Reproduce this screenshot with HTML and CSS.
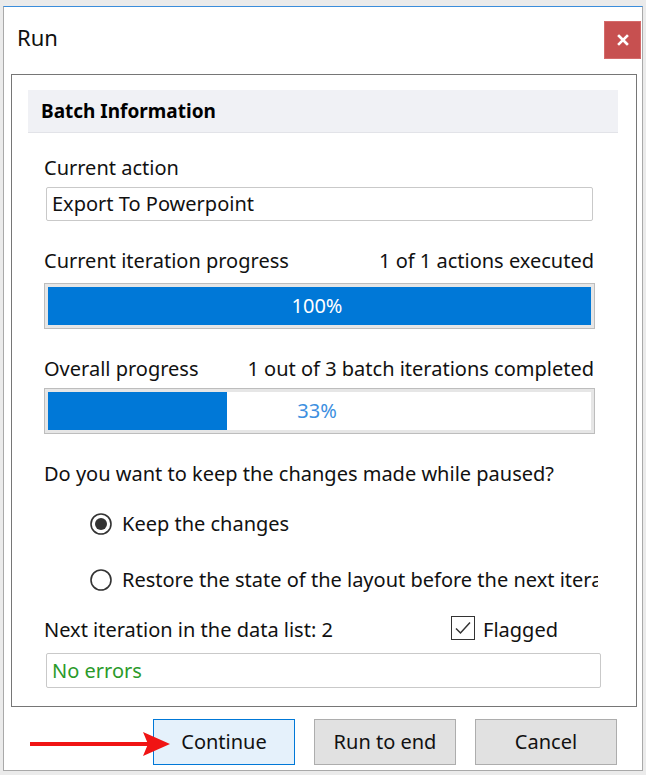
FILE: index.html
```html
<!DOCTYPE html>
<html>
<head>
<meta charset="utf-8">
<link rel="stylesheet" href="styles.css">
</head>
<body>
<div class="window">
  <div class="titlebar">
    <span class="title">Run</span>
    <div class="close">
      <svg width="12" height="12" viewBox="0 0 12 12"><path d="M2 2 L10 10 M10 2 L2 10" stroke="#fff" stroke-width="2.6" stroke-linecap="square"/></svg>
    </div>
  </div>
  <div class="group">
    <div class="group-header">Batch Information</div>
    <div class="group-body">
      <div class="label l-action">Current action</div>
      <div class="field">Export To Powerpoint</div>

      <div class="label-row l-iter"><span>Current iteration progress</span><span>1 of 1 actions executed</span></div>
      <div class="bar b-iter">
        <div class="track">
          <div class="fill" style="width:100%"></div>
          <span class="pct pct-on">100%</span>
        </div>
      </div>

      <div class="label-row l-overall"><span>Overall progress</span><span>1 out of 3 batch iterations completed</span></div>
      <div class="bar b-overall">
        <div class="track">
          <div class="fill" style="width:33%"></div>
          <span class="pct pct-off">33%</span>
        </div>
      </div>

      <div class="label question">Do you want to keep the changes made while paused?</div>

      <div class="radio-row r-keep">
        <svg class="radio" width="22" height="22" viewBox="0 0 22 22"><circle cx="11" cy="11" r="10" fill="#fff" stroke="#333" stroke-width="1.6"/><circle cx="11" cy="11" r="6" fill="#333"/></svg>
        <span class="radio-text">Keep the changes</span>
      </div>
      <div class="radio-row r-restore">
        <svg class="radio" width="22" height="22" viewBox="0 0 22 22"><circle cx="11" cy="11" r="10" fill="#fff" stroke="#333" stroke-width="1.6"/></svg>
        <span class="radio-text">Restore the state of the layout before the next iteration</span>
      </div>

      <div class="next-row">
        <span>Next iteration in the data list: 2</span>
        <div class="flag">
          <svg class="check" width="24" height="24" viewBox="0 0 24 24"><rect x="0.5" y="0.5" width="23" height="23" fill="#fff" stroke="#333" stroke-width="1"/><polyline points="5,12.5 9.5,17 19,6.5" fill="none" stroke="#333" stroke-width="1.5"/></svg>
          <span>Flagged</span>
        </div>
      </div>
      <div class="field status">No errors</div>
    </div>
  </div>
  <div class="actions">
    <svg class="arrow" width="142" height="26" viewBox="0 0 142 26"><rect x="0" y="11" width="118" height="4" fill="#f01414"/><polygon points="113,1 140,13 113,25 118,13" fill="#f01414"/></svg>
    <div class="btn btn-primary">Continue</div>
    <div class="btn">Run to end</div>
    <div class="btn">Cancel</div>
  </div>
</div>
</body>
</html>
```
FILE: styles.css
```css
html, body {
  margin: 0;
  padding: 0;
}
body {
  background: #ebebeb;
  font-family: "Noto Sans", "Open Sans", sans-serif;
  font-size: 20px;
  color: #111;
  width: 646px;
  height: 775px;
  overflow: hidden;
}
.window {
  box-sizing: border-box;
  margin: 6px 0 0 3px;
  width: 640px;
  height: 765px;
  background: #fff;
  border: 1px solid #a9a9a9;
  border-top: 1px solid #3b8ddb;
  display: flex;
  flex-direction: column;
}
.titlebar {
  height: 67px;
  display: flex;
  align-items: flex-start;
  justify-content: space-between;
}
.title {
  margin: 15px 0 0 13px;
  font-size: 22px;
  line-height: 30px;
  color: #111;
}
.close {
  margin: 14px 1px 0 0;
  width: 37px;
  height: 38px;
  background: #c75050;
  box-sizing: border-box;
  border: 1px solid #d46a6a;
  display: flex;
  align-items: center;
  justify-content: center;
}
.group {
  margin: 0 5px 0 7px;
  border: 1px solid #767676;
  padding: 15px 18px 18px 16px;
}
.group-header {
  height: 43px;
  box-sizing: border-box;
  background: #f0f1f5;
  border-bottom: 1px solid #e2e3e8;
  padding-left: 13px;
  font-weight: bold;
  font-size: 19px;
  line-height: 43px;
  color: #000;
}
.group-body {
  padding: 0 24px 0 16px;
  display: flex;
  flex-direction: column;
}
.label, .label-row {
  line-height: 26px;
  white-space: nowrap;
}
.label-row {
  display: flex;
  justify-content: space-between;
}
.l-action { margin-top: 22px; }
.field {
  box-sizing: border-box;
  margin: 6px 0 0 2px;
  width: 547px;
  height: 34px;
  border: 1px solid #c9c9c9;
  border-radius: 2px;
  padding-left: 5px;
  line-height: 32px;
  color: #111;
}
.l-iter { margin-top: 27px; }
.b-iter { margin-top: 9px; }
.l-overall { margin-top: 27px; }
.b-overall { margin-top: 6px; }
.bar {
  box-sizing: border-box;
  width: 551px;
  height: 46px;
  border: 1px solid #bdbdbd;
  padding: 3px;
  background: #e6e6e6;
}
.track {
  height: 100%;
  background: #fff;
  display: grid;
}
.fill, .pct {
  grid-area: 1 / 1;
}
.fill {
  background: #0078d7;
  justify-self: start;
  height: 100%;
}
.pct {
  justify-self: center;
  align-self: center;
  line-height: 38px;
  font-size: 20px;
  margin-right: 5px;
}
.pct-on { color: #fff; }
.pct-off { color: #3d8fe0; }
.question { margin-top: 27px; }
.radio-row {
  margin-left: 46px;
  width: 508px;
  height: 26px;
  display: flex;
  align-items: center;
  overflow: hidden;
  white-space: nowrap;
}
.r-keep { margin-top: 24px; }
.r-restore { margin-top: 30px; }
.radio {
  flex: none;
  margin-right: 10px;
}
.radio-text {
  line-height: 26px;
}
.next-row {
  margin-top: 24px;
  height: 26px;
  display: flex;
  align-items: center;
  line-height: 26px;
  white-space: nowrap;
}
.flag {
  margin-left: auto;
  margin-right: 36px;
  display: flex;
  align-items: center;
  gap: 8px;
}
.check {
  margin-top: -4px;
}
.status {
  margin-top: 10px;
  width: 555px;
  height: 35px;
  line-height: 33px;
  color: #2a9a2a;
}
.actions {
  position: relative;
  margin-top: 12px;
  padding-left: 149px;
  display: flex;
  gap: 19px;
}
.btn {
  box-sizing: border-box;
  width: 142px;
  height: 46px;
  background: #e1e1e1;
  border: 1px solid #adadad;
  display: flex;
  align-items: center;
  justify-content: center;
  line-height: 26px;
  color: #111;
}
.btn-primary {
  background: #e5f1fb;
  border-color: #0078d7;
}
.arrow {
  position: absolute;
  left: 26px;
  top: 12px;
}
```
